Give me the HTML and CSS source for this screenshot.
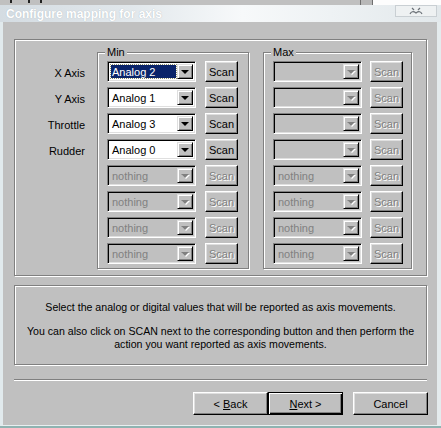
FILE: index.html
```html
<!DOCTYPE html>
<html lang="en">

<head>
    <meta charset="UTF-8">
    <title>Configure mapping for axis</title>
    <link rel="stylesheet" href="styles.css">
</head>

<body>
    <div class="window">
        <!-- window behind the dialog -->
        <div class="behind">
            <span class="speck s1"></span>
            <span class="speck s2"></span>
            <span class="speck s3"></span>
            <span class="behind-fill"></span>
            <span class="behind-box"></span>
            <span class="behind-white"></span>
        </div>

        <div class="titlebar">
            <span class="title">Configure mapping for axis</span>
            <span class="close">
                <svg width="14" height="8" viewBox="0 0 14 8">
                    <path d="M3 1 L5 3 M11 1 L9 3 M1 7 Q3 3 7 6 Q11 3 13 7" fill="none" stroke="#6b7177" stroke-width="1.2"/>
                </svg>
            </span>
        </div>

        <div class="client">
            <div class="axes etched">
                <div class="labels">
                    <div class="label">X Axis</div>
                    <div class="label">Y Axis</div>
                    <div class="label">Throttle</div>
                    <div class="label">Rudder</div>
                </div>

                <div class="group group-min etched">
                    <span class="legend">Min</span>
                    <div class="rows">
                        <div class="combo"><span class="value selected">Analog 2</span><span class="drop"></span></div>
                        <button class="btn scan">Scan</button>
                        <div class="combo"><span class="value">Analog 1</span><span class="drop"></span></div>
                        <button class="btn scan">Scan</button>
                        <div class="combo"><span class="value">Analog 3</span><span class="drop"></span></div>
                        <button class="btn scan">Scan</button>
                        <div class="combo"><span class="value">Analog 0</span><span class="drop"></span></div>
                        <button class="btn scan">Scan</button>
                        <div class="combo disabled"><span class="value">nothing</span><span class="drop"></span></div>
                        <button class="btn scan disabled">Scan</button>
                        <div class="combo disabled"><span class="value">nothing</span><span class="drop"></span></div>
                        <button class="btn scan disabled">Scan</button>
                        <div class="combo disabled"><span class="value">nothing</span><span class="drop"></span></div>
                        <button class="btn scan disabled">Scan</button>
                        <div class="combo disabled"><span class="value">nothing</span><span class="drop"></span></div>
                        <button class="btn scan disabled">Scan</button>
                    </div>
                </div>

                <div class="group group-max etched">
                    <span class="legend">Max</span>
                    <div class="rows">
                        <div class="combo disabled"><span class="value"></span><span class="drop"></span></div>
                        <button class="btn scan disabled">Scan</button>
                        <div class="combo disabled"><span class="value"></span><span class="drop"></span></div>
                        <button class="btn scan disabled">Scan</button>
                        <div class="combo disabled"><span class="value"></span><span class="drop"></span></div>
                        <button class="btn scan disabled">Scan</button>
                        <div class="combo disabled"><span class="value"></span><span class="drop"></span></div>
                        <button class="btn scan disabled">Scan</button>
                        <div class="combo disabled"><span class="value">nothing</span><span class="drop"></span></div>
                        <button class="btn scan disabled">Scan</button>
                        <div class="combo disabled"><span class="value">nothing</span><span class="drop"></span></div>
                        <button class="btn scan disabled">Scan</button>
                        <div class="combo disabled"><span class="value">nothing</span><span class="drop"></span></div>
                        <button class="btn scan disabled">Scan</button>
                        <div class="combo disabled"><span class="value">nothing</span><span class="drop"></span></div>
                        <button class="btn scan disabled">Scan</button>
                    </div>
                </div>
            </div>

            <div class="info etched">
                <p>Select the analog or digital values that will be reported as axis movements.</p>
                <p>You can also click on SCAN next to the corresponding button and then perform the<br>action you want reported as axis movements.</p>
            </div>

            <div class="separator"></div>

            <div class="buttons">
                <button class="btn wide">&lt; <u>B</u>ack</button>
                <button class="btn wide default"><u>N</u>ext &gt;</button>
                <button class="btn wide cancel">Cancel</button>
            </div>
        </div>
    </div>
</body>

</html>
```

FILE: styles.css
```css
* {
    margin: 0;
    padding: 0;
    box-sizing: border-box;
}

body {
    background: #c0c0c0;
    font-family: 'Liberation Sans', Arial, sans-serif;
    font-size: 11px;
    color: #000;
}

.window {
    width: 441px;
    height: 428px;
    display: flex;
    flex-direction: column;
    background: #c0c0c0;
    border-bottom: 2px solid #8fb3b1;
}

/* strip of the window behind */
.behind {
    height: 5px;
    display: flex;
    background: #c0c0c0;
}

.speck {
    width: 2px;
    height: 3px;
    background: #222;
}

.s1 { margin-left: 10px; }
.s2 { margin-left: 16px; }
.s3 { margin-left: 10px; }

.behind-fill {
    flex: 1;
}

.behind-box {
    width: 13px;
    border-left: 1px solid #6f6f6f;
    border-right: 1px solid #6f6f6f;
    background: #b8b8b8;
}

.behind-white {
    width: 68px;
    background: #fdfdfd;
}

/* title bar */
.titlebar {
    height: 17px;
    display: flex;
    align-items: center;
    justify-content: space-between;
    padding-left: 6px;
    padding-right: 4px;
    background: linear-gradient(to right, #d4dce2, #e2e8ec 30%, #f7f9fa 55%, #eef2f4 75%, #e2e8eb);
}

.title {
    font-weight: bold;
    font-size: 12px;
    color: #fff;
    text-shadow: 0 0 1px #a7b2ba;
}

.close {
    width: 42px;
    height: 12px;
    margin-bottom: 5px;
    display: flex;
    align-items: center;
    justify-content: center;
    background: #eef1f2;
    border: 1px solid #c9cfd3;
}

/* client area */
.client {
    flex: 1;
    border-left: 3px solid #e1eaed;
    border-right: 4px solid #e4ebed;
    border-bottom: 1px solid #e9eff0;
    padding: 17px 0 0 11px;
}

.etched {
    border: 1px solid #808080;
    box-shadow: inset 1px 1px 0 #fff, 1px 1px 0 #fff;
}

.axes {
    width: 413px;
    height: 237px;
    display: flex;
    padding-top: 12px;
}

.labels {
    width: 82px;
    padding: 11px 12px 0 0;
    display: flex;
    flex-direction: column;
    gap: 5px;
}

.label {
    height: 21px;
    line-height: 21px;
    text-align: right;
}

.group {
    position: relative;
    height: 217px;
    padding: 8px 0 0 9px;
}

.group-min {
    width: 152px;
    margin-right: 14px;
}

.group-max {
    width: 149px;
}

.legend {
    position: absolute;
    top: -7px;
    left: 7px;
    padding: 0 2px;
    line-height: 13px;
    background: #c0c0c0;
}

.rows {
    display: grid;
    grid-template-columns: 89px 33px;
    grid-auto-rows: 21px;
    column-gap: 9px;
    row-gap: 5px;
}

.group-max .rows {
    column-gap: 8px;
}

/* combo box */
.combo {
    display: flex;
    padding: 2px;
    background: #fff;
    border: 1px solid;
    border-color: #808080 #fff #fff #808080;
    box-shadow: inset 1px 1px 0 #000, inset -1px -1px 0 #dfdfdf;
}

.combo .value {
    flex: 1;
    margin: 1px 1px 1px 0;
    padding-left: 2px;
    line-height: 15px;
    white-space: nowrap;
    overflow: hidden;
}

.combo .value.selected {
    margin-left: 1px;
    padding-left: 1px;
    background: #0a246a;
    color: #fff;
    outline: 1px dotted #8d8f6a;
}

.combo.disabled {
    background: #c0c0c0;
}

.combo.disabled .value {
    color: #808080;
}

.drop {
    width: 16px;
    display: flex;
    align-items: center;
    justify-content: center;
    background: #c0c0c0;
    border: 1px solid;
    border-color: #dfdfdf #000 #000 #dfdfdf;
    box-shadow: inset 1px 1px 0 #fff, inset -1px -1px 0 #808080;
}

.drop::after {
    content: "";
    border-left: 4px solid transparent;
    border-right: 4px solid transparent;
    border-top: 4px solid #000;
    margin-top: 1px;
}

.combo.disabled .drop::after {
    border-top-color: #808080;
    filter: drop-shadow(1px 1px 0 #fff);
}

/* push buttons */
.btn {
    font-family: 'Liberation Sans', Arial, sans-serif;
    font-size: 11px;
    color: #000;
    background: #c0c0c0;
    border: 1px solid;
    border-color: #fff #000 #000 #fff;
    box-shadow: inset -1px -1px 0 #808080, inset 1px 1px 0 #dfdfdf;
}

.btn.disabled {
    color: #808080;
    text-shadow: 1px 1px 0 #fff;
}

.info {
    width: 413px;
    height: 80px;
    margin-top: 9px;
    padding-top: 15px;
    text-align: center;
    font-size: 10.6px;
    line-height: 13px;
}

.info p + p {
    margin-top: 11px;
}

.separator {
    width: 413px;
    height: 2px;
    margin-top: 14px;
    border-top: 1px solid #808080;
    border-bottom: 1px solid #fff;
}

.buttons {
    width: 414px;
    margin-top: 11px;
    display: flex;
    justify-content: flex-end;
}

.btn.wide {
    width: 75px;
    height: 23px;
}

.btn.default {
    border: 1px solid #000;
    box-shadow: inset 1px 1px 0 #fff, inset -1px -1px 0 #000, inset -2px -2px 0 #808080;
}

.btn.cancel {
    margin-left: 10px;
}
```
